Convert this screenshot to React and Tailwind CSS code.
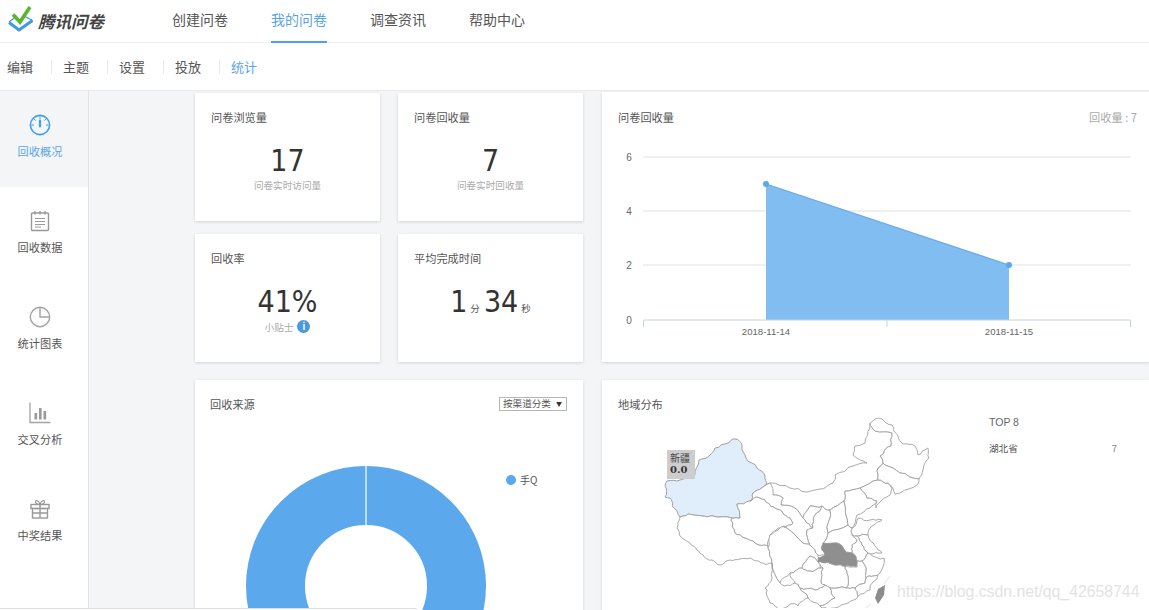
import React from 'react';

const cjk = { fontFamily: '"Noto Sans CJK SC", "Noto Sans", sans-serif' };

const navItems = ['创建问卷', '我的问卷', '调查资讯', '帮助中心'];
const subItems = ['编辑', '主题', '设置', '投放', '统计'];

// map provinces, in the picture's own coordinates
const xinjiang = '665,488 667,483 680,482 695,477 699,462 710,457 715,450 728,445 735,441 742,448 746,460 757,470 765,478 766,487 753,495 750,503 737,506 740,520 732,520 713,518 702,518 688,516 680,519 672,508 670,500 665,499';
const hubei = '823,545 837,545 845,553 852,555 857,563 856,569 845,568 837,567 828,564 818,564 818,560 825,557 822,552';
const provinces = [
    '766,487 770,485 790,490 806,494 820,491 833,485 835,477 853,468 867,465 853,457 855,448 865,445 870,430 870,425 875,433 892,435 891,448 880,458 883,465 878,470 878,482 860,490 845,493 844,503 830,512 822,508 810,508 803,520 795,510 781,507 783,500 773,497',
    '680,519 677,530 680,538 690,545 697,552 703,557 712,562 720,567 726,563 730,562 740,561 750,560 757,563 763,565 768,566 772,565 768,550 768,548 755,545 745,540 735,535 731,522 732,520 713,518 702,518 688,516',
    '737,506 750,503 756,499 760,500 768,505 775,510 783,515 790,520 793,525 787,528 780,530 775,533 770,537 768,548 755,545 745,540 735,535 731,522 732,520 740,520',
    '753,495 766,487 770,485 773,497 783,500 781,507 795,510 803,520 805,522 813,530 807,532 810,547 803,545 795,537 787,530 780,530 787,528 793,525 790,520 783,515 775,510 768,505 760,500 756,499 750,503',
    '810,508 822,508 815,517 813,530 805,522 803,520',
    '828,535 823,545 822,552 825,557 818,557 810,547 807,532 813,530 815,517 822,508 830,512',
    '830,512 844,503 848,527 828,535',
    '844,503 845,493 860,490 867,500 877,503 870,510 857,517 852,530 848,527',
    '860,490 878,482 888,485 892,490 890,497 882,502 876,510 877,503 867,500',
    '852,530 858,520 870,522 882,522 874,527 870,530 868,537 857,538 852,537',
    '828,535 848,527 852,530 852,537 857,543 852,547 852,555 845,553 837,545 823,545',
    '852,537 857,538 862,547 868,555 862,563 857,563 852,555 852,547 857,543',
    '857,538 868,537 875,548 882,555 870,556 868,555 862,547',
    '868,555 870,556 884,560 880,575 873,578 866,580 866,570 862,563',
    '857,569 857,563 862,563 866,570 866,580 865,585 855,590 846,590 848,578 845,568',
    '866,580 873,578 878,577 870,592 858,598 855,590 865,585',
    '818,564 828,564 837,567 845,568 848,578 846,590 830,590 825,587 821,585 823,570',
    '770,537 780,530 787,530 795,537 803,545 810,547 818,557 818,564 810,558 802,570 797,572 790,575 780,585 772,565 768,550',
    '818,564 810,558 802,570 810,573 821,570',
    '797,572 802,570 810,573 821,570 823,570 821,585 825,587 815,592 800,590 795,585 790,575',
    '772,565 780,585 785,588 795,585 800,590 808,600 798,608 790,606 780,612 770,605 767,592 765,590 772,580',
    '800,590 815,592 825,587 830,590 835,600 820,608 808,600',
    '830,590 846,590 855,590 858,598 848,605 835,610 822,610 820,608 835,600',
    '880,458 891,448 892,435 875,433 870,425 875,421 882,421 892,427 898,438 903,446 915,448 918,457 928,450 929,460 923,472 919,481 900,475 885,467 883,465',
    '878,470 883,465 885,467 900,475 919,481 918,486 900,495 895,496 888,485 878,482',
];

// borders are not straight: split each edge and nudge the midpoints. The nudge depends
// only on the two ends, so neighbouring provinces still share the same border
const wiggleEdge = (a, b, depth) => {
    const flip = a[0] > b[0] || (a[0] === b[0] && a[1] > b[1]);
    const [p, q] = flip ? [b, a] : [a, b];
    const dx = q[0] - p[0];
    const dy = q[1] - p[1];
    const len = Math.hypot(dx, dy);
    if (depth === 0 || len < 3) return [];
    const seed = Math.sin(p[0] * 12.9898 + p[1] * 78.233 + q[0] * 37.719 + q[1] * 4.581) * 43758.5453;
    const off = (seed - Math.floor(seed) - 0.5) * Math.min(len * 0.35, 3.2);
    const mid = [(p[0] + q[0]) / 2 - (dy / len) * off, (p[1] + q[1]) / 2 + (dx / len) * off];
    const left = wiggleEdge(p, mid, depth - 1);
    const right = wiggleEdge(mid, q, depth - 1);
    const pts = [...left, mid, ...right];
    return flip ? pts.reverse() : pts;
};

const wiggle = (points) => {
    const pts = points.split(' ').map((s) => s.split(',').map(parseFloat));
    return pts
        .flatMap((pt, i) => [pt, ...wiggleEdge(pt, pts[(i + 1) % pts.length], 2)])
        .map((pt) => `${pt[0].toFixed(1)},${pt[1].toFixed(1)}`)
        .join(' ');
};

const MapChart = () => (
    <svg width="280" height="195" viewBox="660 415 280 195" className="block shrink-0">
        <polygon points={wiggle(xinjiang)} fill="#e0edfa" stroke="#a0a0a0" strokeWidth="1" strokeLinejoin="round" />
        {provinces.map((points) => (
            <polygon key={points} points={wiggle(points)} fill="#fff" stroke="#a0a0a0" strokeWidth="0.9" strokeLinejoin="round" />
        ))}
        <polygon points={wiggle(hubei)} fill="#8f8f8f" stroke="#999" strokeWidth="0.8" />
        <polygon points="885,587 884,597 878,606 875,600 878,591" fill="#8c8c8c" />
        <path d="M890 578L884 586M871 606L866 610" stroke="#e2e2e2" fill="none" />
    </svg>
);

const AreaChart = () => (
    <svg width="531" height="210" viewBox="618 140 531 210" className="block">
        {[157, 211, 265].map((y) => (
            <line key={y} x1="643" x2="1131" y1={y} y2={y} stroke="#e2e2e2" />
        ))}
        {[['6', 157], ['4', 211], ['2', 265], ['0', 320]].map(([label, y]) => (
            <text key={label} x="629" y={y + 4} textAnchor="middle" fontSize="10" fill="#666" fontFamily="Liberation Sans">
                {label}
            </text>
        ))}
        <polygon points="766,184 1009,265 1009,320 766,320" fill="#82bdf2" />
        <line x1="766" y1="184" x2="1009" y2="265" stroke="#62aaec" strokeWidth="1.2" />
        <circle cx="766" cy="184" r="3" fill="#5ba8ec" />
        <circle cx="1009" cy="265" r="3" fill="#5ba8ec" />
        <path d="M643.5 327V320H1130.5V327M887 320V327" stroke="#c5d3e2" fill="none" />
        <text x="766" y="335" textAnchor="middle" fontSize="9.6" fill="#666" fontFamily="Liberation Sans">2018-11-14</text>
        <text x="1009" y="335" textAnchor="middle" fontSize="9.6" fill="#666" fontFamily="Liberation Sans">2018-11-15</text>
    </svg>
);

const Donut = () => (
    <svg width="244" height="240" viewBox="0 0 244 240" className="block">
        <circle cx="122" cy="120" r="90.5" fill="none" stroke="#5ba8ec" strokeWidth="59" />
        <line x1="122" x2="122" y1="0" y2="60" stroke="#fff" strokeWidth="1.2" />
    </svg>
);

const GaugeIcon = () => (
    <svg width="22" height="22" viewBox="0 0 22 22" fill="none" stroke="#3fa0ec" strokeWidth="1.6">
        <circle cx="11" cy="11" r="9.6" />
        <path d="M11 2.500v2.500M2.500 11h2.500M17 11h2.500M5 5l1.600 1.600M17 5l-1.600 1.600" strokeWidth="1" />
        <path d="M11 6.500v6" strokeWidth="2.200" strokeLinecap="round" />
    </svg>
);

const NotesIcon = () => (
    <svg width="22" height="22" viewBox="0 0 22 22" fill="none" stroke="#999" strokeWidth="1.4">
        <rect x="2.500" y="3" width="17" height="17.500" rx="1" />
        <path d="M6 1v3.500M11 1v3.500M16 1v3.500" />
        <path d="M6 8.500h10M6 11.500h10M6 14.500h10M6 17h6" strokeWidth="1.100" />
    </svg>
);

const PieIcon = () => (
    <svg width="22" height="22" viewBox="0 0 22 22" fill="none" stroke="#a3a3a3" strokeWidth="1.4">
        <circle cx="11" cy="11" r="9.700" />
        <path d="M11 1.300V11H20.700" />
    </svg>
);

const BarsIcon = () => (
    <svg width="22" height="22" viewBox="0 0 22 22" fill="none">
        <path d="M1 0.500V20.500H21.500" stroke="#a3a3a3" strokeWidth="1.300" />
        <rect x="5.500" y="11" width="2.600" height="6.500" fill="#999" />
        <rect x="10" y="6" width="2.600" height="11.500" fill="#999" />
        <rect x="14.500" y="9" width="2.600" height="8.500" fill="#999" />
    </svg>
);

const GiftIcon = () => (
    <svg width="22" height="22" viewBox="0 0 22 22" fill="none" stroke="#999" strokeWidth="1.4">
        <rect x="2" y="6.500" width="18" height="4" />
        <rect x="3.500" y="10.500" width="15" height="9.500" />
        <path d="M11 6.500V20M3.500 15H18.500" />
        <path d="M11 6.500C8 6.500 6.500 5.500 6.500 3.800C6.500 2 9.500 1.500 11 6.500C12.500 1.500 15.500 2 15.500 3.800C15.500 5.500 14 6.500 11 6.500Z" strokeWidth="1.200" />
    </svg>
);

const sideItems = [
    { label: '回收概况', Icon: GaugeIcon, active: true },
    { label: '回收数据', Icon: NotesIcon },
    { label: '统计图表', Icon: PieIcon },
    { label: '交叉分析', Icon: BarsIcon },
    { label: '中奖结果', Icon: GiftIcon },
];

const Card = ({ className = '', children }) => (
    <div className={`bg-white shadow-[0_1px_3px_rgba(0,0,0,0.14)] ${className}`}>{children}</div>
);

const Number = ({ children, className = '' }) => (
    <span className={`text-[30px] leading-[34px] text-[#333] ${className}`} style={{ fontFamily: '"DejaVu Sans Condensed", "DejaVu Sans", sans-serif' }}>
        {children}
    </span>
);

const StatCard = ({ title, children }) => (
    <Card className="h-[128px] px-4 pt-4">
        <div className="text-[11.200px] leading-4 text-[#555]">{title}</div>
        <div className="mt-[19px] flex flex-col items-center">{children}</div>
    </Card>
);

const App = () => {
    return (
        <div className="relative flex h-[610px] w-[1149px] flex-col overflow-hidden bg-white" style={cjk}>
            {/* top nav */}
            <header className="flex h-[43px] shrink-0 items-stretch border-b border-[#eeeeee]">
                <div className="flex w-[172px] items-center pl-2">
                    <svg width="28" height="28" viewBox="0 0 28 28" className="-mt-1 shrink-0">
                        <path d="M1 17.500L11 25L24.500 15.500" fill="none" stroke="#3d9ae4" strokeWidth="3" strokeLinejoin="round" />
                        <path d="M1 17L7 12.500M24.500 15.500L17 11.500" fill="none" stroke="#3d9ae4" strokeWidth="1.200" />
                        <path d="M5 9.500L12 17L22 2" fill="none" stroke="#5ab52f" strokeWidth="3.600" />
                    </svg>
                    <span className="ml-[2px] text-[16.500px] font-bold italic text-[#444]">腾讯问卷</span>
                </div>
                <nav className="flex gap-[43px]">
                    {navItems.map((item) => (
                        <div
                            key={item}
                            className={`-mb-px flex items-center border-b-2 pb-1 text-sm ${
                                item === '我的问卷' ? 'border-[#4ca2ea] text-[#5aa5e6]' : 'border-transparent text-[#555]'
                            }`}
                        >
                            {item}
                        </div>
                    ))}
                </nav>
            </header>

            {/* sub nav */}
            <div className="flex h-[48px] shrink-0 items-center border-b border-[#eaeaea] pl-[7px]">
                {subItems.map((item, i) => (
                    <React.Fragment key={item}>
                        {i > 0 && <span className="ml-[18px] mr-[11px] h-[14px] w-px bg-[#e0ebf5]" />}
                        <span className={`w-[26px] whitespace-nowrap text-[13px] ${item === '统计' ? 'text-[#5aa5e6]' : 'text-[#555]'}`}>
                            {item}
                        </span>
                    </React.Fragment>
                ))}
            </div>

            <div className="flex min-h-0 flex-1">
                {/* side menu */}
                <aside className="w-[89px] shrink-0 border-r border-[#e2e2e2]">
                    {sideItems.map(({ label, Icon, active }) => (
                        <div key={label} className={`flex h-[96px] flex-col items-center pr-[8px] pt-[23px] ${active ? 'bg-[#f4f5f7]' : ''}`}>
                            <Icon />
                            <span className={`mt-[7px] text-[11.200px] leading-4 ${active ? 'text-[#5aa5e6]' : 'text-[#555]'}`}>{label}</span>
                        </div>
                    ))}
                </aside>

                {/* content */}
                <main className="flex min-w-0 flex-1 flex-col gap-[18px] overflow-hidden bg-[#f4f5f7] pl-[106px] pt-[2px]">
                    <div className="flex shrink-0 gap-[19px]">
                        <div className="grid w-[388px] shrink-0 grid-cols-[185px_185px] gap-x-[18px] gap-y-[13px]">
                            <StatCard title="问卷浏览量">
                                <Number>17</Number>
                                <span className="mt-[1px] text-[9.600px] leading-3 text-[#aaa]">问卷实时访问量</span>
                            </StatCard>
                            <StatCard title="问卷回收量">
                                <Number>7</Number>
                                <span className="mt-[1px] text-[9.600px] leading-3 text-[#aaa]">问卷实时回收量</span>
                            </StatCard>
                            <StatCard title="回收率">
                                <Number>41%</Number>
                                <div className="mt-[1px] flex items-center gap-1 text-[9.600px] leading-3 text-[#aaa]">
                                    小贴士
                                    <span className="flex size-[13px] items-center justify-center rounded-full bg-[#4a98e0] text-[9px] font-bold leading-none text-white">
                                        i
                                    </span>
                                </div>
                            </StatCard>
                            <StatCard title="平均完成时间">
                                <div className="flex items-baseline">
                                    <Number>1</Number>
                                    <span className="ml-[3px] mr-[4px] text-[9.600px] text-[#555]">分</span>
                                    <Number>34</Number>
                                    <span className="ml-[3px] text-[9.600px] text-[#555]">秒</span>
                                </div>
                            </StatCard>
                        </div>
                        <Card className="-mt-px h-[270px] min-w-0 flex-1 pt-[17px]">
                            <div className="flex justify-between pl-4 pr-3 text-[11.200px] leading-4">
                                <span className="text-[#555]">问卷回收量</span>
                                <span className="text-[#aaa]">回收量 : 7</span>
                            </div>
                            <div className="ml-4 mt-[15px]">
                                <AreaChart />
                            </div>
                        </Card>
                    </div>

                    <div className="flex min-h-0 flex-1 gap-[19px]">
                        <Card className="relative h-[300px] w-[388px] shrink-0 px-4 pt-4">
                            <div className="flex items-start justify-between">
                                <span className="-ml-px text-[11.200px] leading-4 text-[#555]">回收来源</span>
                                <div className="mt-px flex h-[14px] w-[68px] items-center justify-between border border-[#b5b5b5] pl-[3px] pr-[4px] text-[9.600px] leading-none text-[#555]">
                                    按渠道分类
                                    <span className="text-[6px] text-[#333]">▼</span>
                                </div>
                            </div>
                            <div className="relative mt-[54px] flex">
                                <div className="ml-[33px]">
                                    <Donut />
                                </div>
                                <div className="ml-[18px] mt-[6px] flex items-center gap-1 self-start text-[10px] leading-4 text-[#555]">
                                    <span className="size-[10px] rounded-full bg-[#5ba8ec]" />
                                    手Q
                                </div>
                            </div>
                        </Card>
                        <Card className="h-[300px] min-w-0 flex-1 pt-4">
                            <div className="pl-4 text-[11.200px] leading-4 text-[#555]">地域分布</div>
                            <div className="mt-px flex">
                                <div className="relative ml-[58px]">
                                    <MapChart />
                                    <div className="absolute left-[7px] top-[37px] h-[29px] w-[28px] bg-[#cdcdcd] pl-[3px] pt-[2px] text-[10px] leading-3 text-[#444]">
                                        新疆
                                        <div className="text-[10px] font-bold text-[#333]" style={{ fontFamily: '"DejaVu Serif", serif' }}>0.0</div>
                                    </div>
                                </div>
                                <div className="ml-[49px] w-[128px] pt-[1px]">
                                    <div className="text-[10.500px] leading-4 text-[#666]" style={{ fontFamily: '"Liberation Sans", sans-serif' }}>TOP 8</div>
                                    <div className="mt-[10px] flex justify-between text-[9.600px] leading-4 text-[#555]">
                                        <span>湖北省</span>
                                        <span className="text-[#888]">7</span>
                                    </div>
                                </div>
                            </div>
                        </Card>
                    </div>
                </main>
            </div>

            {/* page watermark and the edge of a bar cut off by the screenshot */}
            <div className="absolute bottom-0 left-0 h-[2px] w-[417px] rounded-tr-sm border-t border-[#dddddd] bg-white" />
            <div
                className="pointer-events-none absolute left-[897px] top-[582px] whitespace-nowrap text-[15.800px] leading-5 text-[#e3e3e3]"
                style={{ fontFamily: '"Liberation Sans", sans-serif' }}
            >
                https://blog.csdn.net/qq_42658744
            </div>
        </div>
    );
};

export default App;
